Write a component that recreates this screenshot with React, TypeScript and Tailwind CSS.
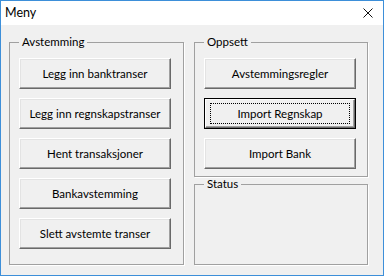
import React from 'react';

const left = [
  'Legg inn banktranser',
  'Legg inn regnskapstranser',
  'Hent transaksjoner',
  'Bankavstemming',
  'Slett avstemte transer',
];

function WinButton({ label, focused = false }: { label: string; focused?: boolean }) {
  if (focused) {
    return (
      <div className="w-[152px] h-[31px] border border-black flex">
        <div className="flex-1 flex items-center justify-center bg-[#f0f0f0] border border-t-white border-l-white border-r-[#696969] border-b-[#696969] shadow-[inset_-1px_-1px_0_#a0a0a0]">
          <div className="w-[140px] h-[21px] border border-dotted border-black flex items-center justify-center">
            {label}
          </div>
        </div>
      </div>
    );
  }
  return (
    <div className="w-[152px] h-[31px] flex items-center justify-center whitespace-nowrap bg-[#f0f0f0] border border-t-white border-l-white border-r-[#696969] border-b-[#696969] shadow-[inset_-1px_-1px_0_#a0a0a0,inset_1px_1px_0_#e3e3e3]">
      {label}
    </div>
  );
}

function Group({ title, className, children }: { title: string; className: string; children?: React.ReactNode }) {
  return (
    <fieldset className={`border border-[#a0a0a0] shadow-[1px_1px_0_white] px-[9px] ${className}`}>
      <legend className="px-[3px] leading-[16px]">{title}</legend>
      {children}
    </fieldset>
  );
}

export default function App() {
  return (
    <div className='w-[384px] h-[276px] border border-[#3d8fd9] bg-[#f0f0f0] flex flex-col font-["Lato",sans-serif] text-[11.5px] text-black'>
      <div className="h-[24px] bg-white flex items-center justify-between pl-[4px] pr-[10px]">
        <span className="leading-[16px] text-[12.5px]">Meny</span>
        <svg width="10" height="10" viewBox="0 0 10 10">
          <path d="M0.5 0.5 L9.5 9.5 M9.5 0.5 L0.5 9.5" stroke="#111" strokeWidth="1" fill="none" />
        </svg>
      </div>
      <div className="flex-1 flex pl-[8px] pr-[15px] pt-[9px] pb-[10px] gap-[10px]">
        <Group title="Avstemming" className="w-[175px] h-[231px]">
          <div className="flex flex-col gap-[9px] pt-[8px]">
            {left.map((l) => (
              <WinButton key={l} label={l} />
            ))}
          </div>
        </Group>
        <div className="w-[174px] flex flex-col">
          <Group title="Oppsett" className="h-[143px]">
            <div className="flex flex-col gap-[9px] pt-[8px]">
              <WinButton label="Avstemmingsregler" />
              <WinButton label="Import Regnskap" focused />
              <WinButton label="Import Bank" />
            </div>
          </Group>
          <Group title="Status" className="flex-1 mt-[-1px]" />
        </div>
      </div>
    </div>
  );
}
